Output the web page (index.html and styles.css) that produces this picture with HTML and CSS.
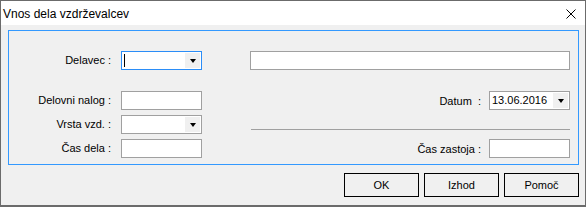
FILE: index.html
```html
<!DOCTYPE html>
<html lang="sl">
<head>
    <meta charset="UTF-8">
    <title>Vnos dela vzdrževalcev</title>
    <link rel="stylesheet" href="styles.css">
</head>
<body>
    <div class="window">
        <div class="titlebar">
            <span class="title">Vnos dela vzdrževalcev</span>
            <svg class="close" width="10" height="10" viewBox="0 0 10 10">
                <path d="M0.5 0.5 L9.5 9.5 M9.5 0.5 L0.5 9.5" stroke="#000" stroke-width="1"></path>
            </svg>
        </div>
        <div class="content">
            <div class="frame">
                <!-- row 1 -->
                <div class="label">Delavec :</div>
                <div class="combo focused">
                    <span class="caret"></span>
                    <span class="drop"><span class="arrow"></span></span>
                </div>
                <div></div>
                <div class="right"><div class="textbox wide"></div></div>

                <!-- row 2 -->
                <div class="label">Delovni nalog :</div>
                <div class="textbox"></div>
                <div></div>
                <div class="right">
                    <span class="rlabel">Datum&nbsp; :</span>
                    <div class="combo">
                        <span class="value">13.06.2016</span>
                        <span class="drop"><span class="arrow"></span></span>
                    </div>
                </div>

                <!-- row 3 -->
                <div class="label">Vrsta vzd. :</div>
                <div class="combo">
                    <span class="drop"><span class="arrow"></span></span>
                </div>
                <div></div>
                <div class="right sep-cell"><div class="separator"></div></div>

                <!-- row 4 -->
                <div class="label">Čas dela :</div>
                <div class="textbox"></div>
                <div></div>
                <div class="right">
                    <span class="rlabel">Čas zastoja :</span>
                    <div class="textbox"></div>
                </div>
            </div>
            <div class="buttons">
                <button class="btn">OK</button>
                <button class="btn">Izhod</button>
                <button class="btn">Pomoč</button>
            </div>
        </div>
    </div>
</body>
</html>
```

FILE: styles.css
```css
body {
    margin: 0;
    font-family: "Liberation Sans", Arial, sans-serif;
    font-size: 11px;
    color: #000;
    background: #fff;
}
.window {
    width: 586px;
    height: 207px;
    box-sizing: border-box;
    border: 1px solid #6b6b6b;
    border-bottom-width: 2px;
    background: #f0f0f0;
    display: flex;
    flex-direction: column;
}
.titlebar {
    height: 24px;
    background: #fff;
    display: flex;
    align-items: center;
    justify-content: space-between;
    padding: 0 9px 0 2px;
}
.title {
    font-size: 12px;
    margin-top: 1px;
}
.close {
    margin-top: 1px;
}
.content {
    flex: 1;
    padding: 5px 6px 0 7px;
}
.frame {
    height: 135px;
    box-sizing: border-box;
    border: 1px solid #3399ff;
    padding: 20px 8px 0 0;
    display: grid;
    grid-template-columns: 112px 81px 47px 1fr;
    grid-template-rows: 35px 19px 19px 19px;
    row-gap: 5px;
    align-items: start;
}
.label {
    text-align: right;
    padding-right: 10px;
    line-height: 19px;
}
.right {
    display: flex;
    justify-content: flex-end;
    align-items: center;
    height: 19px;
}
.rlabel {
    margin-right: 8px;
}
.textbox {
    width: 81px;
    height: 19px;
    box-sizing: border-box;
    border: 1px solid #a0a0a0;
    background: #fff;
}
.textbox.wide {
    width: 320px;
}
.combo {
    width: 81px;
    height: 19px;
    box-sizing: border-box;
    border: 1px solid #a0a0a0;
    background: #fff;
    position: relative;
    display: flex;
    align-items: center;
}
.combo.focused {
    border-color: #2b8df7;
}
.caret {
    width: 1px;
    height: 13px;
    background: #000;
    margin-left: 2px;
}
.value {
    padding-left: 2px;
    line-height: 17px;
}
.drop {
    position: absolute;
    top: 1px;
    right: 1px;
    width: 15px;
    height: 15px;
    background: #f0f0f0;
    display: flex;
    align-items: center;
    justify-content: center;
}
.arrow {
    width: 0;
    height: 0;
    border-left: 3.5px solid transparent;
    border-right: 3.5px solid transparent;
    border-top: 4px solid #000;
    margin-top: 1px;
}
.sep-cell {
    align-items: flex-start;
}
.separator {
    width: 319px;
    height: 1px;
    background: #a0a0a0;
    margin-top: 14px;
}
.buttons {
    display: flex;
    justify-content: flex-end;
    gap: 5px;
    margin-top: 8px;
}
.btn {
    width: 75px;
    height: 24px;
    border: 1px solid #000;
    background: #f0f0f0;
    font-family: "Liberation Sans", Arial, sans-serif;
    font-size: 11px;
    color: #000;
    padding: 0;
}
```
